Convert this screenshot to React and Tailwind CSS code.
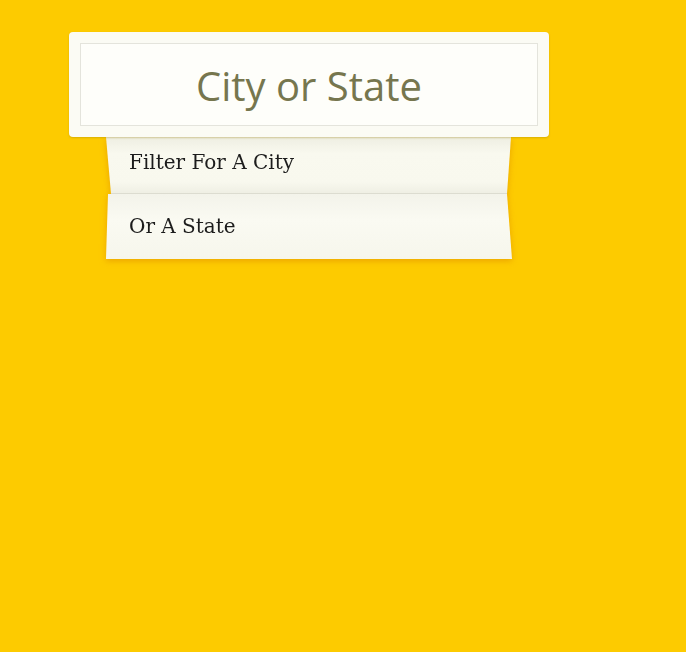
export default function App() {
  return (
    <div className="w-[686px] h-[652px] bg-[#fdcb00] pt-[32px] overflow-hidden">
      <div className="ml-[69px] w-[480px] h-[105px] rounded-[4px] bg-[#fbfbf4] p-[11px] shadow-[0_1px_2px_rgba(150,120,0,0.35)] relative z-10">
        <div className="h-full border border-[#e4e4dc] bg-[#fefefa] flex items-center justify-center">
          <span className="text-[40px] text-[#76764e] leading-none pt-[2px]" style={{ fontFamily: '"Open Sans", "Noto Sans", sans-serif' }}>
            City or State
          </span>
        </div>
      </div>
      <div className="ml-[106px] w-[407px] [filter:drop-shadow(0_2px_3px_rgba(225,140,0,0.6))]">
        <div className="h-[57px] bg-[linear-gradient(#eeeee2,#f9f9ef_30%,#f8f8ee_80%,#efefe4)] border-b border-[#dcdcd0] flex items-center pl-[23px] pb-[6px] [clip-path:polygon(0_0,405px_0,401px_100%,5px_100%)]">
          <span className="text-[20px] text-[#1c1c1c]" style={{ fontFamily: '"DejaVu Serif", serif' }}>Filter For A City</span>
        </div>
        <div className="h-[65px] bg-[linear-gradient(#f3f3ea,#fafaf2_40%,#f6f6ec)] flex items-center pl-[23px] pb-[2px] [clip-path:polygon(2px_0,401px_0,406px_100%,0_100%)]">
          <span className="text-[20px] text-[#1c1c1c]" style={{ fontFamily: '"DejaVu Serif", serif' }}>Or A State</span>
        </div>
      </div>
    </div>
  );
}
